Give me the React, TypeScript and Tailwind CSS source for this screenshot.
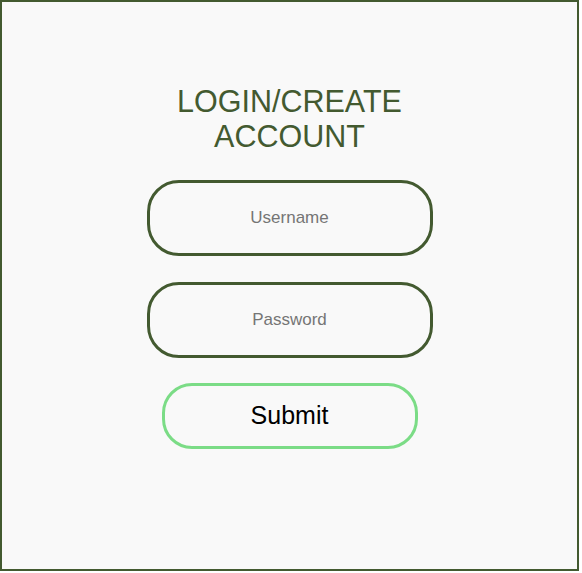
export default function App() {
  return (
    <div className="w-[579px] h-[571px] border-2 border-[#435a30] bg-[#f9f9f9] flex flex-col items-center pt-[82px] font-['Liberation_Sans',Arial,sans-serif]">
      <h1 className="text-[30.5px] leading-[35px] text-[#435a30] text-center w-[270px]">
        LOGIN/CREATE ACCOUNT
      </h1>
      <input
        type="text"
        placeholder="Username"
        className="mt-[26px] w-[286px] h-[76px] border-[3px] border-[#435a30] rounded-[32px] bg-transparent text-center text-[17px] placeholder:text-[#757575] outline-none"
      />
      <input
        type="password"
        placeholder="Password"
        className="mt-[26px] w-[286px] h-[76px] border-[3px] border-[#435a30] rounded-[32px] bg-transparent text-center text-[17px] placeholder:text-[#757575] outline-none"
      />
      <button className="mt-[25px] w-[256px] h-[66px] border-[3px] border-[#7bdc86] rounded-[30px] bg-transparent text-[25px] text-black">
        Submit
      </button>
    </div>
  )
}
